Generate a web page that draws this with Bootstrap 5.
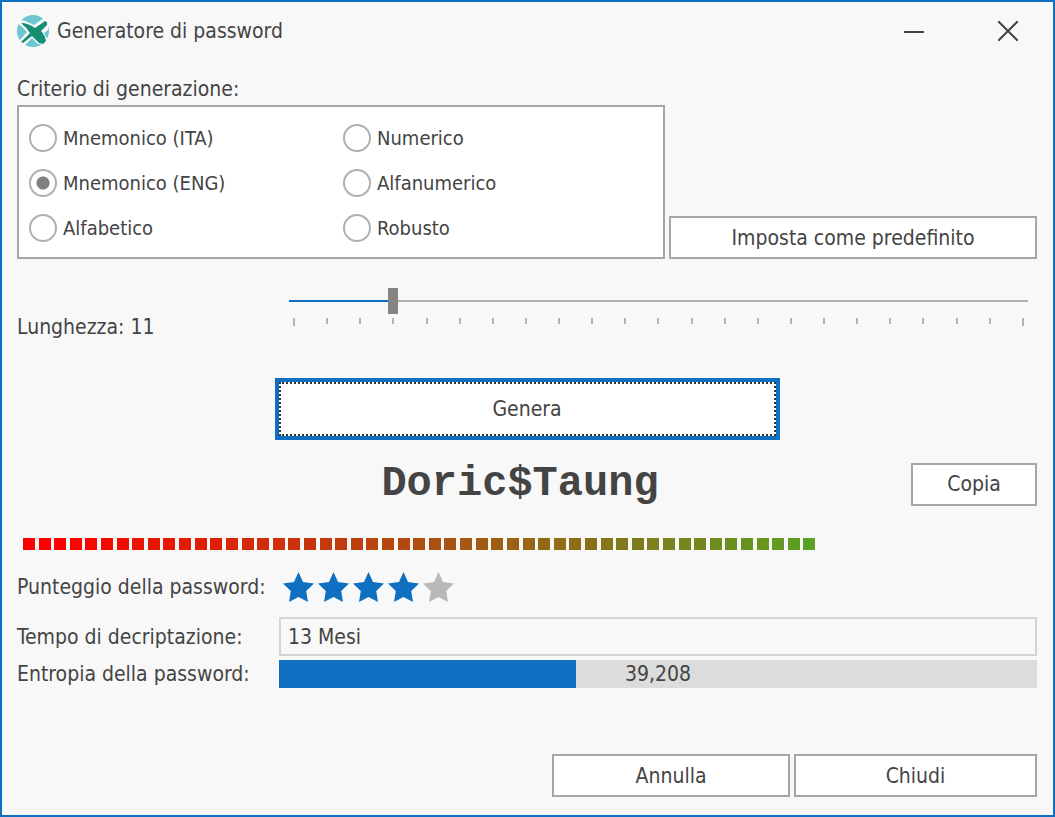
<!DOCTYPE html>
<html lang="it">
<head>
<meta charset="utf-8">
<meta name="viewport" content="width=device-width, initial-scale=1">
<title>Generatore di password</title>
<link rel="stylesheet" href="https://cdn.jsdelivr.net/npm/bootstrap@5.3.0/dist/css/bootstrap.min.css">
<style>
  :root { --accent: #0f6fc1; --line: #a6a6a6; --ink: #444; --label-col: 262px; }
  body { font-family: "DejaVu Sans Condensed", "Noto Sans", sans-serif; font-size: 21px; line-height: 28px; color: var(--ink); background: #f8f8f8; }
  .dialog { border: 2px solid var(--accent); padding: 0 16px 18px 15px; }
  .titlebar { height: 58px; padding-right: 6px; }
  .caption-btn { width: 46px; height: 46px; border: 0; background: none; color: #444; padding: 0; }
  .legend-line { margin: 15px 0 2px; }
  .criteria { width: 648px; height: 154px; border: 2px solid var(--line); background: #fff; padding: 8px 10px; font-size: 20px; }
  .criteria .col-a { width: 314px; }
  .option-row { height: 45px; gap: 6px; }
  .form-check-input.choice { width: 28px; height: 28px; margin: 0; border: 2px solid #b0b0b0; background: #fff; box-shadow: none; }
  .form-check-input.choice:checked { background: radial-gradient(circle, #808080 0 6px, #fff 7px); }
  .btn.tool { font-size: 21px; line-height: 28px; height: 43px; padding: 0; border: 2px solid var(--line); border-radius: 0; background: #fff; color: var(--ink); }
  .btn.tool.primary { width: calc(50% - 5px); height: 62px; border: 4px solid var(--accent); outline: 2px dotted #333; outline-offset: -6px; }
  .btn.copy { width: 126px; }
  .btn.cancel { width: 238px; }
  .btn.dismiss { width: 243px; }
  .labels { width: var(--label-col); }
  .length-row { padding-top: 29px; margin-bottom: 37px; }
  .length-row .labels { padding-top: 25px; }
  .slider-box { padding: 0 9px 0 10px; }
  .slider { appearance: none; display: block; width: 100%; height: 26px; margin: 0;
    background: linear-gradient(var(--accent), var(--accent)) 0 center / var(--filled) 2px no-repeat, linear-gradient(#b0b0b0, #b0b0b0) 0 center / 100% 2px no-repeat; }
  .slider::-webkit-slider-thumb { appearance: none; width: 10px; height: 26px; background: #858585; border: 0; }
  .ticks { padding: 0 4px; height: 8px; margin-top: 4px; }
  .ticks span { width: 2px; height: 6px; background: #b4b4b4; }
  .ticks span:first-child, .ticks span:last-child { height: 8px; }
  .result-row { margin: 20px 0 30px; padding-left: 112px; }
  .secret { font: bold 42px/48px "Liberation Mono", monospace; }
  .strength { width: calc(78% + 3px); padding-left: 6px; margin-bottom: 22px; }
  .strength span { width: 12px; height: 12px; }
  .score-row { margin-bottom: 15px; }
  .readout { height: 39px; border: 2px solid #d4d4d4; background: #f8f8f8; color: var(--ink); padding: 0 7px; min-width: 0; }
  .progress.entropy { height: 28px; border-radius: 0; background: #dcdcdc; font-size: 21px; }
  .entropy .progress-bar { background: var(--accent); }
  .entropy-value { line-height: 28px; color: var(--ink); }
</style>
</head>
<body>
<main class="dialog min-vh-100 d-flex flex-column">
  <header class="titlebar d-flex align-items-center">
    <svg width="32" height="32" viewBox="0 0 32 32" class="me-2" aria-hidden="true">
      <circle cx="16" cy="16" r="16" fill="#6cc7d0"/>
      <path d="M0 8 5 5Q12 7 17 10L27 3 32 8 31 15 27 18 31 25 28 30 21 29 15 23 8 30 2 26 10 17Q6 12 0 8Z" fill="#f8f8f8"/>
      <path d="M4 8Q11 8 18 13L28 6Q31 7 30 10L24 16Q28 20 29 26L26 29 22 28 15 21 6 28 4 27 13 18Q9 12 4 8Z" fill="#168e73"/>
    </svg>
    <span class="me-auto">Generatore di password</span>
    <button class="caption-btn me-5" aria-label="Riduci a icona"><svg class="d-block mx-auto" width="20" height="20" viewBox="0 0 20 20" stroke="currentColor" stroke-width="2"><path d="M0 11H20"/></svg></button>
    <button class="caption-btn" aria-label="Chiudi finestra"><svg class="d-block mx-auto" width="20" height="20" viewBox="0 0 20 20" stroke="currentColor" stroke-width="2"><path d="M0 0 20 20M20 0 0 20"/></svg></button>
  </header>

  <div class="legend-line" id="criterio">Criterio di generazione:</div>
  <div class="d-flex align-items-end gap-1">
    <div class="criteria d-flex flex-shrink-0" role="radiogroup" aria-labelledby="criterio">
      <div class="col-a">
        <label class="option-row d-flex align-items-center"><input class="form-check-input choice" type="radio" name="criterio">Mnemonico (ITA)</label>
        <label class="option-row d-flex align-items-center"><input class="form-check-input choice" type="radio" name="criterio" checked>Mnemonico (ENG)</label>
        <label class="option-row d-flex align-items-center"><input class="form-check-input choice" type="radio" name="criterio">Alfabetico</label>
      </div>
      <div>
        <label class="option-row d-flex align-items-center"><input class="form-check-input choice" type="radio" name="criterio">Numerico</label>
        <label class="option-row d-flex align-items-center"><input class="form-check-input choice" type="radio" name="criterio">Alfanumerico</label>
        <label class="option-row d-flex align-items-center"><input class="form-check-input choice" type="radio" name="criterio">Robusto</label>
      </div>
    </div>
    <button class="btn tool flex-grow-1">Imposta come predefinito</button>
  </div>

  <div class="length-row d-flex">
    <label class="labels flex-shrink-0" for="len">Lunghezza: 11</label>
    <div class="slider-box flex-grow-1">
      <input class="slider" id="len" type="range" min="8" max="30" value="11">
      <div class="ticks d-flex justify-content-between" id="ticks"></div>
    </div>
  </div>

  <div class="d-flex justify-content-center">
    <button class="btn tool primary">Genera</button>
  </div>

  <div class="result-row d-flex align-items-center">
    <output class="secret flex-grow-1 text-center">Doric$Taung</output>
    <button class="btn tool copy">Copia</button>
  </div>

  <div class="strength d-flex justify-content-between" id="strength"></div>

  <div class="score-row d-flex align-items-center">
    <span class="labels">Punteggio della password:</span>
    <span class="d-flex gap-1 ps-1" id="stars" role="img" aria-label="4 su 5"></span>
  </div>
  <div class="d-flex align-items-center">
    <label class="labels flex-shrink-0" for="time">Tempo di decriptazione:</label>
    <input class="readout flex-grow-1" id="time" readonly value="13 Mesi">
  </div>
  <div class="d-flex align-items-center mt-1">
    <span class="labels flex-shrink-0">Entropia della password:</span>
    <div class="progress entropy flex-grow-1 position-relative">
      <div class="progress-bar" style="width:39.208%"></div>
      <span class="entropy-value position-absolute w-100 text-center">39,208</span>
    </div>
  </div>

  <footer class="d-flex justify-content-end gap-1 mt-auto">
    <button class="btn tool cancel">Annulla</button>
    <button class="btn tool dismiss">Chiudi</button>
  </footer>
</main>
<script src="https://cdn.jsdelivr.net/npm/bootstrap@5.3.0/dist/js/bootstrap.bundle.min.js"></script>
<script>
  const len = document.getElementById('len');
  const fill = () => len.style.setProperty('--filled', (len.value - len.min) / (len.max - len.min) * 100 + '%');
  len.addEventListener('input', fill);
  fill();
  document.getElementById('ticks').innerHTML = '<span></span>'.repeat(len.max - len.min + 1);

  // Strength meter: from red to green over 51 blocks
  const n = 51, from = [255, 0, 0], to = [90, 160, 34];
  document.getElementById('strength').innerHTML = Array.from({ length: n }, (_, i) => {
    const t = Math.max(0, (i - 2) / (n - 3));
    return `<span style="background:rgb(${from.map((v, k) => Math.round(v + (to[k] - v) * t))})"></span>`;
  }).join('');

  document.getElementById('stars').innerHTML = [1, 2, 3, 4, 5].map(i =>
    `<svg width="31" height="30" viewBox="0 0 31 30"><path fill="${i <= 4 ? '#0f6fc1' : '#b9b9b9'}" d="M15.500 0 20 10 31 11.500 23.200 19 25 30 15.500 25 6 30 7.800 19 0 11.500 11 10Z"/></svg>`).join('');
</script>
</body>
</html>
